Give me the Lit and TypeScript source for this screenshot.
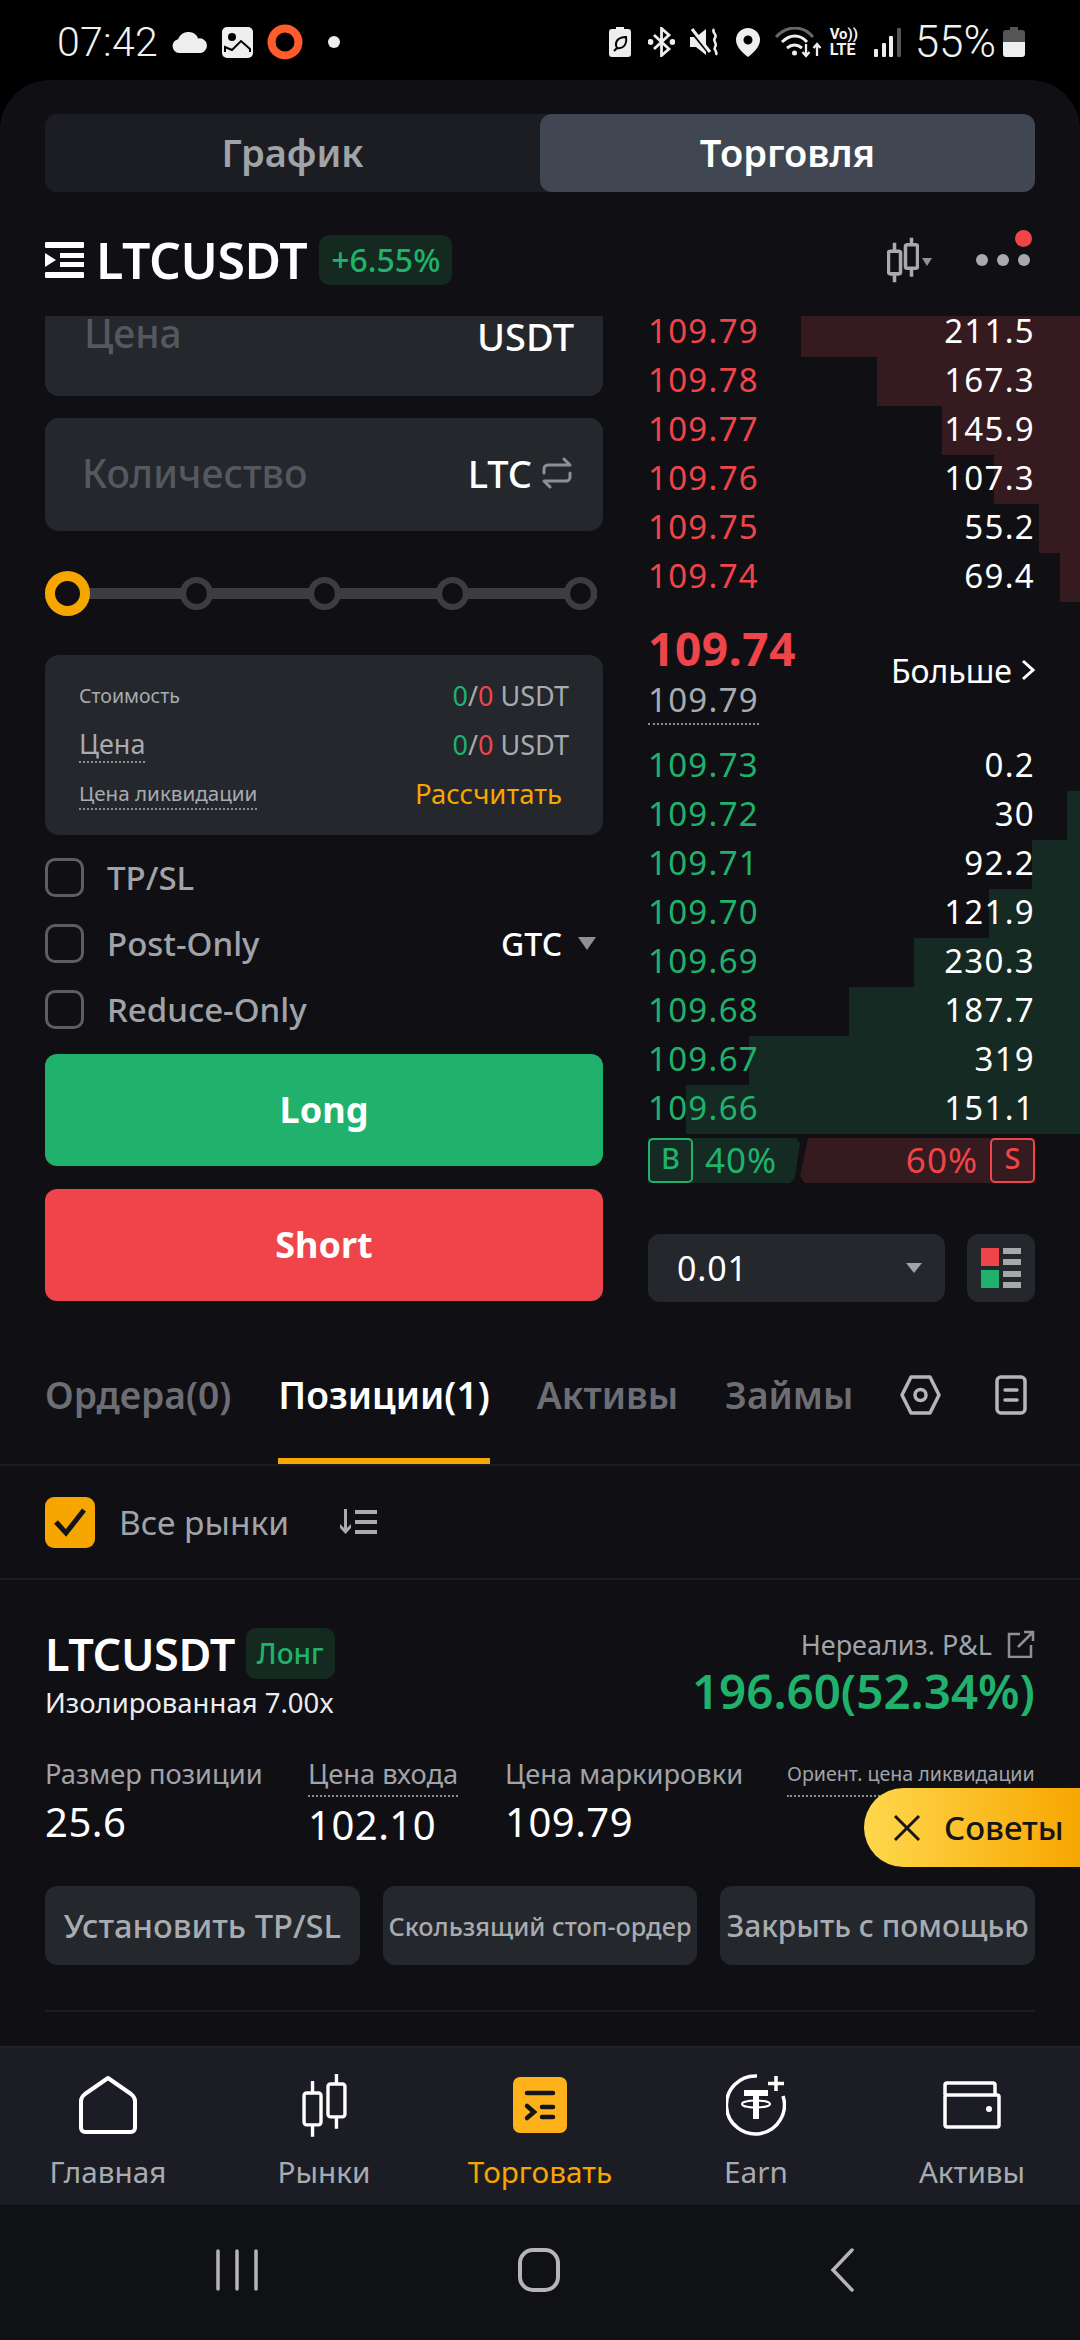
import { LitElement, html, css } from 'lit';
import { customElement } from 'lit/decorators.js';

const asks = [
  { price: '109.79', qty: '211.5', w: 279 },
  { price: '109.78', qty: '167.3', w: 203 },
  { price: '109.77', qty: '145.9', w: 138 },
  { price: '109.76', qty: '107.3', w: 86 },
  { price: '109.75', qty: '55.2', w: 41 },
  { price: '109.74', qty: '69.4', w: 20 },
];

const bids = [
  { price: '109.73', qty: '0.2', w: 0 },
  { price: '109.72', qty: '30', w: 13 },
  { price: '109.71', qty: '92.2', w: 48 },
  { price: '109.70', qty: '121.9', w: 91 },
  { price: '109.69', qty: '230.3', w: 166 },
  { price: '109.68', qty: '187.7', w: 231 },
  { price: '109.67', qty: '319', w: 331 },
  { price: '109.66', qty: '151.1', w: 394 },
];

const candles = (color: string, w: number, sw = 3.4) => html`
  <svg width="${w}" height="${w * 1.44}" viewBox="0 0 45 65" fill="none" stroke="${color}" stroke-width="${sw}" stroke-linejoin="round">
    <rect x="2" y="20" width="17" height="32" rx="2.5"></rect>
    <path d="M10.5 8v12M10.5 52v12"></path>
    <rect x="26" y="11" width="17" height="33" rx="2.5"></rect>
    <path d="M34.5 1v10M34.5 44v12"></path>
  </svg>`;

@customElement('app-root')
export class AppRoot extends LitElement {
  static styles = css`
    :host {
      display: block;
      position: relative;
      width: 1080px;
      height: 2340px;
      overflow: hidden;
      background: #000;
      font-family: 'Noto Sans', sans-serif;
      color: #fff;
    }
    svg {
      display: block;
      flex: none;
    }

    /* status bar */
    .status {
      height: 80px;
      display: flex;
      justify-content: space-between;
      align-items: center;
      padding: 4px 55px 0 57px;
      box-sizing: border-box;
      font-family: 'Roboto', sans-serif;
      font-weight: 300;
      color: #f2f2f2;
    }
    .status-side {
      display: flex;
      align-items: center;
    }
    .clock {
      font-size: 41px;
      letter-spacing: 0.3px;
      margin-right: 14px;
    }
    .pct {
      font-size: 44px;
      margin: 0 7px 0 14px;
    }
    .volte {
      display: flex;
      flex-direction: column;
      font-size: 15px;
      font-weight: 700;
      line-height: 15px;
      margin: 0 13px 0 8px;
      width: 31px;
    }
    .volte span:last-child {
      font-size: 16px;
    }

    /* panel */
    .panel {
      height: 2125px;
      background: #101014;
      border-radius: 50px 50px 0 0;
      display: flex;
      flex-direction: column;
    }
    .switch {
      margin: 34px 45px 0;
      height: 78px;
      display: grid;
      grid-template-columns: 1fr 1fr;
      background: #1c1d22;
      border-radius: 12px;
      font-size: 38px;
      font-weight: 600;
      color: #a0a3a8;
      text-align: center;
      line-height: 76px;
    }
    .switch .on {
      background: #404752;
      color: #fff;
      border-radius: 12px;
    }
    .head {
      margin: 43px 45px 31px;
      height: 50px;
      display: flex;
      align-items: center;
    }
    .pair {
      font-size: 50px;
      font-weight: 600;
      line-height: 50px;
      margin: 0 12px;
      letter-spacing: -0.4px;
    }
    .chg {
      height: 50px;
      padding: 0 12px;
      border-radius: 10px;
      background: #14291f;
      color: #20b26c;
      font-size: 32px;
      line-height: 50px;
      font-weight: 500;
    }
    .head-tools {
      margin-left: auto;
      display: flex;
      align-items: center;
      margin-right: 5px;
    }
    .head-tools .tri {
      width: 0;
      height: 0;
      border: 5.5px solid transparent;
      border-top: 8px solid #8e9096;
      border-bottom: 0;
      margin: 4px 44px 0 3px;
    }
    .more {
      position: relative;
      display: flex;
      gap: 9px;
    }
    .more i {
      width: 12px;
      height: 12px;
      border-radius: 50%;
      background: #a8aaae;
    }
    .more b {
      position: absolute;
      right: -2px;
      top: -24px;
      width: 17px;
      height: 17px;
      border-radius: 50%;
      background: #ef454a;
    }

    /* trade area */
    .trade {
      height: 1024px;
      display: grid;
      grid-template-columns: 558px 432px;
      column-gap: 45px;
      padding-left: 45px;
    }
    .field {
      height: 113px;
      background: #24272c;
      border-radius: 14px;
      display: flex;
      align-items: center;
      padding: 0 31px 3px 37px;
      box-sizing: border-box;
      margin-bottom: 22px;
      font-size: 39px;
      line-height: 38px;
      color: #55585e;
      font-weight: 500;
    }
    .field.scrolled {
      height: 80px;
      border-radius: 0 0 14px 14px;
      padding: 0 29px 46px 39px;
    }
    .field.scrolled .unit {
      margin-top: 6px;
    }
    .field .unit {
      margin-left: auto;
      color: #fff;
      font-size: 38px;
    }
    .field svg {
      margin-left: 10px;
    }
    .slider {
      margin: 40px 6px 0 0;
      height: 45px;
      display: flex;
      align-items: center;
      gap: 95px;
      background: linear-gradient(#3c3d40, #3c3d40) center / 100% 11px no-repeat;
    }
    .slider i {
      width: 33px;
      height: 33px;
      box-sizing: border-box;
      border-radius: 50%;
      background: #101014;
      border: 6px solid #3c3d40;
    }
    .slider i.cur {
      width: 45px;
      height: 45px;
      border: 10px solid #f7a600;
      margin-right: -5px;
    }
    .info {
      margin-top: 39px;
      height: 180px;
      box-sizing: border-box;
      background: #24272c;
      border-radius: 14px;
      padding: 16px 34px;
    }
    .info div {
      height: 49px;
      display: flex;
      justify-content: space-between;
      align-items: center;
      font-size: 27px;
      color: #a8abb0;
    }
    .dot-line {
      border-bottom: 2px dotted #8b8e93;
    }
    .info .s {
      font-size: 19.5px;
      line-height: 30px;
    }
    .info .s.liq {
      font-size: 20.6px;
    }
    .info .m {
      font-size: 27px;
      line-height: 34px;
    }
    .up {
      color: #20b26c;
    }
    .dn {
      color: #ef454a;
    }
    .calc {
      color: #f7a600;
      margin-right: 7px;
      font-size: 27.5px;
    }
    .checks {
      margin-top: 9px;
    }
    .check {
      height: 66px;
      display: flex;
      align-items: center;
      font-size: 33px;
      font-weight: 500;
      color: #a0a3a8;
    }
    .box {
      width: 39px;
      height: 39px;
      box-sizing: border-box;
      border: 3px solid #5c5e63;
      border-radius: 10px;
      margin-right: 23px;
    }
    .gtc {
      margin-left: auto;
      margin-right: 7px;
      display: flex;
      align-items: center;
      color: #fff;
      gap: 16px;
      font-size: 32px;
    }
    .gtc i {
      width: 0;
      height: 0;
      border: 9px solid transparent;
      border-top: 13px solid #8e9096;
      border-bottom: 0;
    }
    .cta {
      margin-top: 23px;
      height: 112px;
      box-sizing: border-box;
      padding-bottom: 2px;
      border-radius: 12px;
      display: flex;
      align-items: center;
      justify-content: center;
      font-size: 36px;
      font-weight: 700;
    }
    .cta.long {
      background: #20b26c;
      margin-top: 12px;
    }
    .cta.short {
      background: #ef454a;
    }

    /* order book */
    .book {
      font-size: 33px;
    }
    .row {
      position: relative;
      display: flex;
      justify-content: space-between;
      align-items: center;
      width: 387px;
      height: 49px;
      box-sizing: border-box;
      padding-bottom: 3px;
      line-height: 30px;
      letter-spacing: 1.3px;
    }
    .row.first {
      height: 41px;
      padding-bottom: 11px;
    }
    .row span {
      position: relative;
    }
    .row .qty {
      color: #fff;
    }
    .row .bar {
      position: absolute;
      top: 0;
      bottom: 0;
      right: -45px;
    }
    .ask .bar {
      background: #351a1f;
    }
    .bid .bar {
      background: #142a22;
    }
    .mid {
      height: 140px;
      width: 387px;
      display: flex;
      justify-content: space-between;
      align-items: center;
    }
    .mid-left {
      display: flex;
      flex-direction: column;
      align-items: flex-start;
    }
    .last {
      font-size: 46px;
      font-weight: 700;
      color: #ef454a;
      line-height: 56px;
      margin-bottom: 3px;
      letter-spacing: 0.6px;
    }
    .mark {
      font-size: 33px;
      line-height: 42px;
      color: #a8abb0;
      letter-spacing: 1.3px;
      padding-bottom: 2px;
    }
    .mid-more {
      display: flex;
      align-items: center;
      gap: 9px;
      font-size: 32px;
      margin-top: -4px;
    }
    .ratio {
      margin-top: 4px;
      width: 387px;
      height: 45px;
      display: flex;
      font-size: 35px;
      line-height: 43px;
      letter-spacing: 1px;
    }
    .ratio .g {
      width: 152px;
      background: #142a22;
      color: #20b26c;
      clip-path: polygon(0 0, 148px 0, 152px 5px, 147px 40px, 142px 45px, 0 45px);
      display: flex;
    }
    .ratio .r {
      flex: 1;
      background: #351a1f;
      color: #ef454a;
      clip-path: polygon(8px 0, 100% 0, 100% 100%, 5px 100%, 0 38px);
      display: flex;
      justify-content: flex-end;
    }
    .ratio b {
      width: 45px;
      height: 45px;
      box-sizing: border-box;
      border: 2.5px solid currentColor;
      border-radius: 5px;
      font-size: 29px;
      font-weight: 500;
      line-height: 36px;
      text-align: center;
      letter-spacing: 0;
    }
    .ratio .g span {
      margin-left: 12px;
    }
    .ratio .r span {
      margin-right: 12px;
    }
    .tick {
      margin-top: 51px;
      width: 387px;
      display: flex;
      justify-content: space-between;
    }
    .tick-sel {
      width: 297px;
      height: 68px;
      box-sizing: border-box;
      padding: 0 23px 0 29px;
      background: #24272c;
      border-radius: 12px;
      display: flex;
      align-items: center;
      justify-content: space-between;
      font-size: 34px;
      letter-spacing: 0.8px;
    }
    .tick-sel i {
      width: 0;
      height: 0;
      border: 8px solid transparent;
      border-top: 10px solid #a0a3a8;
      border-bottom: 0;
    }
    .tick-view {
      width: 68px;
      height: 68px;
      background: #24272c;
      border-radius: 12px;
      display: flex;
      align-items: center;
      justify-content: center;
    }

    /* bottom tabs */
    .tabs {
      display: flex;
      gap: 47px;
      padding: 0 55px 0 45px;
      border-bottom: 2px solid #1c1d22;
      font-size: 37.2px;
      font-weight: 600;
      color: #6c6e73;
    }
    .tab {
      height: 124px;
      box-sizing: border-box;
      padding-top: 30px;
      line-height: 50px;
      border-bottom: 6px solid transparent;
      white-space: nowrap;
    }
    .tab.on {
      color: #fff;
      border-bottom-color: #f7a600;
    }
    .tab-tools {
      margin-left: auto;
      display: flex;
      gap: 54px;
      height: 50px;
      margin-top: 30px;
      align-items: center;
    }
    .filter {
      height: 112px;
      display: flex;
      align-items: center;
      padding-left: 45px;
      border-bottom: 2px solid #1c1d22;
      font-size: 33.5px;
      color: #a0a3a8;
    }
    .filter .on {
      width: 50px;
      height: 51px;
      border-radius: 9px;
      background: #f7a600;
      display: flex;
      align-items: center;
      justify-content: center;
      margin-right: 24px;
    }
    .filter svg.sort {
      margin-left: 50px;
    }

    /* position card */
    .pos {
      padding: 48px 45px 0;
    }
    .pos-head {
      display: flex;
      justify-content: space-between;
      height: 95px;
    }
    .pos-title {
      display: flex;
      align-items: center;
      height: 51px;
      gap: 11px;
    }
    .pos-name {
      font-size: 45px;
      font-weight: 600;
      letter-spacing: -0.4px;
    }
    .tag {
      height: 51px;
      padding: 0 11px;
      background: #14291f;
      color: #20b26c;
      border-radius: 10px;
      font-size: 28px;
      font-weight: 500;
      line-height: 50px;
    }
    .pos-sub {
      margin-top: 4px;
      font-size: 27.5px;
      line-height: 40px;
      color: #eaecef;
    }
    .pnl {
      text-align: right;
    }
    .pnl-label {
      display: flex;
      justify-content: flex-end;
      align-items: center;
      gap: 15px;
      height: 32px;
      font-size: 27px;
      color: #a0a3a8;
    }
    .pnl-val {
      margin-top: 3px;
      font-size: 47.5px;
      line-height: 56px;
      font-weight: 600;
      color: #20b26c;
    }
    .stats {
      margin-top: 31px;
      display: grid;
      grid-template-columns: 263px 197px 282px 248px;
    }
    .stat .lb {
      display: inline-block;
      font-size: 27.3px;
      line-height: 40px;
      color: #a0a3a8;
      white-space: nowrap;
    }
    .stat .lb.dot-line {
      padding-bottom: 1px;
    }
    .stat .lb.sm {
      font-size: 19.6px;
    }
    .stat .val {
      margin-top: 3px;
      font-size: 40px;
      line-height: 50px;
      color: #fff;
      letter-spacing: 0.5px;
    }
    .acts {
      margin-top: 36px;
      display: grid;
      grid-template-columns: repeat(3, 1fr);
      gap: 23px;
    }
    .act {
      height: 79px;
      background: #24272c;
      border-radius: 12px;
      display: flex;
      align-items: center;
      justify-content: center;
      white-space: nowrap;
      font-weight: 500;
      color: #a8abb0;
      font-size: 32.7px;
    }
    .act.trail {
      font-size: 25.3px;
    }
    .act.close {
      font-size: 30px;
    }
    .pos-rule {
      margin-top: 45px;
      height: 2px;
      background: #1c1d22;
    }
    .tips {
      position: absolute;
      right: 0;
      top: 1788px;
      width: 216px;
      height: 79px;
      box-sizing: border-box;
      padding-left: 29px;
      border-radius: 40px 0 0 40px;
      background: linear-gradient(90deg, #ffd84d, #f7a600);
      display: flex;
      align-items: center;
      gap: 23px;
      color: #14151a;
      font-size: 33px;
      font-weight: 500;
      white-space: nowrap;
    }

    /* bottom nav */
    .nav {
      margin-top: auto;
      height: 159px;
      box-sizing: border-box;
      background: #1c1d24;
      border-top: 2px solid #202228;
      display: grid;
      grid-template-columns: repeat(5, 1fr);
    }
    .nav-item {
      display: flex;
      flex-direction: column;
      align-items: center;
      color: #a8abb0;
      font-size: 29.7px;
    }
    .nav-item.on {
      color: #f7a600;
    }
    .nav-ico {
      height: 90px;
      display: flex;
      align-items: center;
      justify-content: center;
      margin-top: 12px;
    }
    .nav-item span {
      line-height: 40px;
      margin-top: 2px;
    }

    /* android keys */
    .keys {
      height: 135px;
      background: #101115;
      display: flex;
      align-items: center;
      padding-left: 216px;
      padding-bottom: 6px;
      box-sizing: border-box;
    }
  `;

  render() {
    return html`
      <div class="status">
        <div class="status-side">
          <span class="clock">07:42</span>
          <svg width="36" height="21" viewBox="0 0 36 21" fill="#eee"><path d="M7 21a7 7 0 0 1-1-13.8A11 11 0 0 1 17 0a9.5 9.5 0 0 1 9 6.5A7.3 7.3 0 0 1 29 21z"></path></svg>
          <svg style="margin-left:14px" width="31" height="31" viewBox="0 0 31 31"><rect width="31" height="31" rx="5" fill="#eee"></rect><circle cx="10" cy="10" r="4" fill="#000"></circle><path d="M3 25v-5l7 3 9-9 9 8v3" fill="none" stroke="#000" stroke-width="2"></path></svg>
          <svg style="margin-left:14px" width="36" height="36" viewBox="0 0 36 36"><circle cx="18" cy="18" r="13.5" fill="none" stroke="#ff5c2e" stroke-width="8"></circle></svg>
          <svg style="margin-left:25px" width="12" height="12" viewBox="0 0 12 12"><circle cx="6" cy="6" r="6" fill="#eee"></circle></svg>
        </div>
        <div class="status-side">
          <svg width="22" height="30" viewBox="0 0 22 30"><path d="M7 0h8v2h4a3 3 0 0 1 3 3v22a3 3 0 0 1-3 3H3a3 3 0 0 1-3-3V5a3 3 0 0 1 3-3h4z" fill="#eee"></path><path d="M5 24l3-3M8 21c-3-6 1-11 9-11 1 7-2 12-9 11z" fill="none" stroke="#000" stroke-width="2"></path></svg>
          <svg style="margin-left:17px" width="27" height="30" viewBox="0 0 27 30" fill="none" stroke="#eee" stroke-width="2.8"><path d="M6 8l15 14-7.5 6.5V1.5L21 8 6 22"></path><circle cx="2.5" cy="15" r="1.5" fill="#eee"></circle><circle cx="24.5" cy="15" r="1.5" fill="#eee"></circle></svg>
          <svg style="margin-left:15px" width="30" height="28" viewBox="0 0 30 28"><path d="M0 9h6L16 1v26L6 19H0z" fill="#eee"></path><path d="M0 2l19 23" stroke="#000" stroke-width="3"></path><path d="M2 1l18 23" stroke="#eee" stroke-width="3"></path><path d="M24 1c-3 4 4 5 1 9-3 3 3 5 0 9-2 3 3 4 1 8" fill="none" stroke="#eee" stroke-width="2.5"></path></svg>
          <svg style="margin-left:16px" width="24" height="29" viewBox="0 0 24 29"><path fill-rule="evenodd" d="M12 0a12 12 0 0 1 12 12c0 7-7 13-12 17C7 25 0 19 0 12A12 12 0 0 1 12 0zm0 7.5a4.5 4.5 0 1 0 0 9 4.5 4.5 0 0 0 0-9z" fill="#eee"></path></svg>
          <svg style="margin-left:15px" width="47" height="31" viewBox="0 0 47 31" fill="none" stroke-width="3"><path d="M1 10c11-12 27-12 37 0" stroke="#666"></path><path d="M7 15c8-8 18-8 25 0M12 21c5-4 10-4 15 0" stroke="#eee"></path><circle cx="19.5" cy="26" r="2.5" fill="#eee"></circle><path d="M31 17v12m-3.5-4l3.5 4 3.5-4M42 29V17m-3.500 4l3.500-4 3.500 4" stroke="#eee" stroke-width="2.3"></path></svg>
          <div class="volte"><span>Vo))</span><span>LTE</span></div>
          <svg width="27" height="29" viewBox="0 0 27 29"><rect y="21" width="4" height="8" rx="1" fill="#eee"></rect><rect x="8" y="15" width="4" height="14" rx="1" fill="#eee"></rect><rect x="15" y="8" width="4" height="21" rx="1" fill="#eee"></rect><rect x="23" width="4" height="29" rx="1" fill="#555"></rect></svg>
          <span class="pct">55%</span>
          <svg width="22" height="30" viewBox="0 0 22 30"><path d="M7 0h8v3h4a3 3 0 0 1 3 3v9H0V6a3 3 0 0 1 3-3h4z" fill="#555"></path><path d="M0 15h22v12a3 3 0 0 1-3 3H3a3 3 0 0 1-3-3z" fill="#eee"></path></svg>
        </div>
      </div>

      <div class="panel">
        <div class="switch">
          <div>График</div>
          <div class="on">Торговля</div>
        </div>

        <div class="head">
          <svg width="39" height="36" viewBox="0 0 39 36" fill="#fff"><rect width="39" height="6" rx="1"></rect><rect y="30" width="39" height="6" rx="1"></rect><path d="M0 11l11 7-11 7z"></path><rect x="15" y="11" width="24" height="5"></rect><rect x="15" y="20" width="24" height="5"></rect></svg>
          <span class="pair">LTCUSDT</span>
          <span class="chg">+6.55%</span>
          <div class="head-tools">
            ${candles('#a8aaae', 32, 5)}
            <i class="tri"></i>
            <div class="more"><i></i><i></i><i></i><b></b></div>
          </div>
        </div>

        <div class="trade">
          <div class="form">
            <div class="field scrolled">Цена<span class="unit">USDT</span></div>
            <div class="field">
              Количество<span class="unit">LTC</span>
              <svg width="30" height="32" viewBox="0 0 30 32" fill="none" stroke="#8e9096" stroke-width="3" stroke-linecap="round" stroke-linejoin="round"><path d="M2 16v-4a4 4 0 0 1 4-4h22l-6-6M28 16v4a4 4 0 0 1-4 4H2l6 6"></path></svg>
            </div>
            <div class="slider"><i class="cur"></i><i></i><i></i><i></i><i></i></div>
            <div class="info">
              <div><span class="s">Стоимость</span><span><span class="up">0</span>/<span class="dn">0</span> USDT</span></div>
              <div><span class="m dot-line">Цена</span><span><span class="up">0</span>/<span class="dn">0</span> USDT</span></div>
              <div><span class="s liq dot-line">Цена ликвидации</span><span class="calc">Рассчитать</span></div>
            </div>
            <div class="checks">
              <div class="check"><i class="box"></i>TP/SL</div>
              <div class="check"><i class="box"></i>Post-Only<span class="gtc">GTC<i></i></span></div>
              <div class="check"><i class="box"></i>Reduce-Only</div>
            </div>
            <div class="cta long">Long</div>
            <div class="cta short">Short</div>
          </div>

          <div class="book">
            ${asks.map(
              (r, i) => html`<div class="row ask ${i === 0 ? 'first' : ''}">
                <i class="bar" style="width:${r.w}px"></i>
                <span class="dn">${r.price}</span><span class="qty">${r.qty}</span>
              </div>`
            )}
            <div class="mid">
              <div class="mid-left">
                <div class="last">109.74</div>
                <span class="mark dot-line">109.79</span>
              </div>
              <div class="mid-more">
                Больше
                <svg width="14" height="24" viewBox="0 0 14 24" fill="none" stroke="#fff" stroke-width="3"><path d="M2 3l10 9-10 9"></path></svg>
              </div>
            </div>
            ${bids.map(
              (r) => html`<div class="row bid">
                <i class="bar" style="width:${r.w}px"></i>
                <span class="up">${r.price}</span><span class="qty">${r.qty}</span>
              </div>`
            )}
            <div class="ratio">
              <div class="g"><b>B</b><span>40%</span></div>
              <div class="r"><span>60%</span><b>S</b></div>
            </div>
            <div class="tick">
              <div class="tick-sel">0.01<i></i></div>
              <div class="tick-view">
                <svg width="40" height="40" viewBox="0 0 40 40"><rect width="18" height="18" fill="#ef454a"></rect><rect y="22" width="18" height="18" fill="#20b26c"></rect><g fill="#a8a8a8"><rect x="22" width="18" height="6"></rect><rect x="22" y="11" width="18" height="6"></rect><rect x="22" y="23" width="18" height="6"></rect><rect x="22" y="34" width="18" height="6"></rect></g></svg>
              </div>
            </div>
          </div>
        </div>

        <div class="tabs">
          <div class="tab">Ордера(0)</div>
          <div class="tab on">Позиции(1)</div>
          <div class="tab">Активы</div>
          <div class="tab">Займы</div>
          <div class="tab-tools">
            <svg width="41" height="40" viewBox="0 0 41 40" fill="none" stroke="#b4b6ba" stroke-width="3.5"><path d="M11 2h19l9 18-9 18H11L2 20z" stroke-linejoin="round"></path><circle cx="20.5" cy="20" r="5.5"></circle></svg>
            <svg width="32" height="40" viewBox="0 0 32 40" fill="none" stroke="#b4b6ba" stroke-width="3.5"><rect x="2" y="2" width="28" height="36" rx="4"></rect><path d="M10 15h12M10 25h12" stroke-linecap="round"></path></svg>
          </div>
        </div>

        <div class="filter">
          <div class="on"><svg width="34" height="30" viewBox="0 0 34 30" fill="none" stroke="#14151a" stroke-width="5"><path d="M3 15l10 11L31 3"></path></svg></div>
          Все рынки
          <svg class="sort" width="38" height="26" viewBox="0 0 38 26" fill="#a8abb0"><path d="M5 0h3v19l4-4v4l-5.5 6L1 19v-4l4 4z"></path><rect x="16" y="1" width="22" height="4"></rect><rect x="16" y="11" width="22" height="4"></rect><rect x="16" y="21" width="22" height="4"></rect></svg>
        </div>

        <div class="pos">
          <div class="pos-head">
            <div>
              <div class="pos-title"><span class="pos-name">LTCUSDT</span><span class="tag">Лонг</span></div>
              <div class="pos-sub">Изолированная 7.00x</div>
            </div>
            <div class="pnl">
              <div class="pnl-label">
                Нереализ. P&L
                <svg width="28" height="28" viewBox="0 0 28 28" fill="none" stroke="#8e9096" stroke-width="2.5"><path d="M13 4H2v23h22V15M11 17L26 2M17 2h9v9"></path></svg>
              </div>
              <div class="pnl-val">196.60(52.34%)</div>
            </div>
          </div>
          <div class="stats">
            <div class="stat"><span class="lb">Размер позиции</span><div class="val">25.6</div></div>
            <div class="stat"><span class="lb dot-line">Цена входа</span><div class="val">102.10</div></div>
            <div class="stat"><span class="lb">Цена маркировки</span><div class="val">109.79</div></div>
            <div class="stat"><span class="lb sm dot-line">Ориент. цена ликвидации</span></div>
          </div>
          <div class="acts">
            <div class="act">Установить TP/SL</div>
            <div class="act trail">Скользящий стоп-ордер</div>
            <div class="act close">Закрыть с помощью</div>
          </div>
          <div class="pos-rule"></div>
        </div>

        <div class="nav">
          <div class="nav-item">
            <div class="nav-ico"><svg width="58" height="58" viewBox="0 0 58 58" fill="none" stroke="#fff" stroke-width="4" stroke-linejoin="round"><path d="M29 2L52 18q4 3 4 7v27a4 4 0 0 1-4 4H6a4 4 0 0 1-4-4V25q0-4 4-7z"></path></svg></div>
            <span>Главная</span>
          </div>
          <div class="nav-item">
            <div class="nav-ico">${candles('#fff', 45)}</div>
            <span>Рынки</span>
          </div>
          <div class="nav-item on">
            <div class="nav-ico"><svg width="54" height="56" viewBox="0 0 54 56"><rect width="54" height="56" rx="7" fill="#ffb11a"></rect><g fill="none" stroke="#14151a" stroke-width="4.5" stroke-linecap="round"><path d="M14 16h26M14 29l7 6-7 6M29 30h11M29 40h11"></path></g></svg></div>
            <span>Торговать</span>
          </div>
          <div class="nav-item">
            <div class="nav-ico"><svg width="60" height="62" viewBox="0 0 60 62" fill="none" stroke="#fff" stroke-width="3.5"><path d="M31 2A29 29 0 1 0 57 22"></path><path d="M50 2v15M42 9.5h16"></path><path d="M18 19h24M30 19v26" stroke-width="6"></path><ellipse cx="30" cy="30" rx="14" ry="3.5" stroke-width="2"></ellipse></svg></div>
            <span>Earn</span>
          </div>
          <div class="nav-item">
            <div class="nav-ico"><svg width="58" height="48" viewBox="0 0 58 48" fill="none" stroke="#fff" stroke-width="3.5" stroke-linejoin="round"><path d="M2 14V4a2 2 0 0 1 2-2h46a2 2 0 0 1 2 2v10"></path><rect x="2" y="14" width="54" height="32" rx="2"></rect><circle cx="46" cy="28" r="3" fill="#fff" stroke="none"></circle></svg></div>
            <span>Активы</span>
          </div>
        </div>
      </div>

      <div class="keys">
        <svg width="42" height="42" viewBox="0 0 42 42" stroke="#b5b5b5" stroke-width="3.5" stroke-linecap="round"><path d="M2 2v38M21 2v38M40 2v38"></path></svg>
        <svg style="margin-left:260px" width="42" height="44" viewBox="0 0 42 44" fill="none" stroke="#b5b5b5" stroke-width="4"><rect x="2" y="2" width="38" height="40" rx="13"></rect></svg>
        <svg style="margin-left:270px" width="24" height="44" viewBox="0 0 24 44" fill="none" stroke="#b5b5b5" stroke-width="3.5" stroke-linecap="round"><path d="M22 2L3 22l19 20"></path></svg>
      </div>

      <div class="tips">
        <svg width="28" height="28" viewBox="0 0 28 28" stroke="#14151a" stroke-width="3"><path d="M2 2l24 24M26 2L2 26"></path></svg>
        Советы
      </div>
    `;
  }
}
